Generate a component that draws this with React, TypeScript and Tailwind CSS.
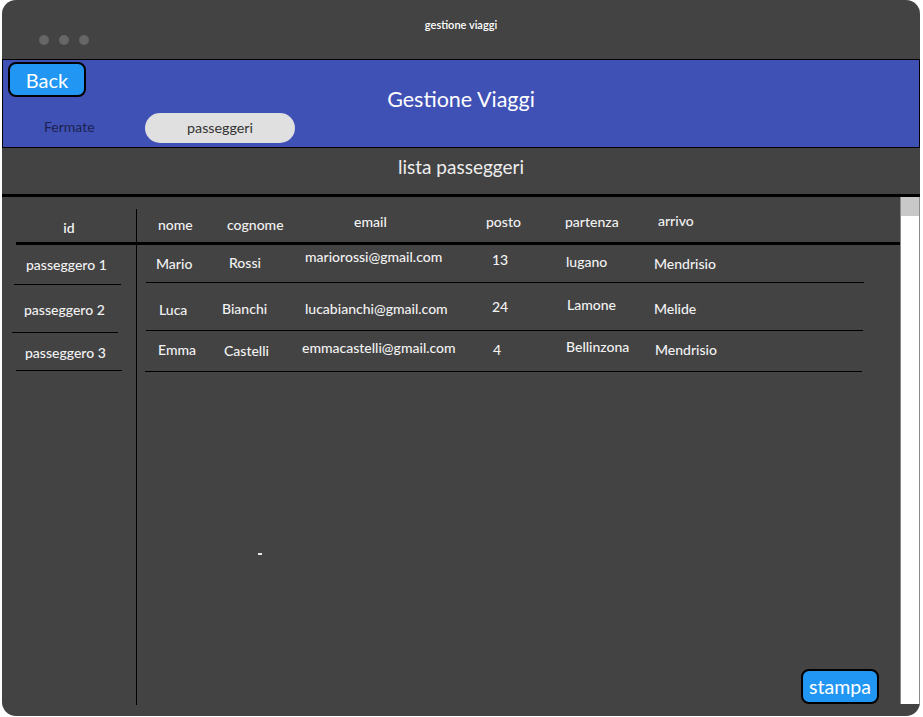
import React from "react";

type Cell = { t: string; pl: number; mt: number };

const COLS = [66, 80, 184, 79, 89, 120];

const header: Cell[] = [
  { t: "nome", pl: 2, mt: 6 },
  { t: "cognome", pl: 5, mt: 6 },
  { t: "email", pl: 52, mt: 3 },
  { t: "posto", pl: 0, mt: 3 },
  { t: "partenza", pl: 0, mt: 3 },
  { t: "arrivo", pl: 4, mt: 2 },
];

const rows: { h: number; cells: Cell[]; line: { ml: number; w: number } }[] = [
  {
    h: 37,
    line: { ml: 9, w: 718 },
    cells: [
      { t: "Mario", pl: 0, mt: 9 },
      { t: "Rossi", pl: 7, mt: 8 },
      { t: "mariorossi@gmail.com", pl: 3, mt: 2 },
      { t: "13", pl: 6, mt: 5 },
      { t: "lugano", pl: 1, mt: 7 },
      { t: "Mendrisio", pl: 0, mt: 9 },
    ],
  },
  {
    h: 47,
    line: { ml: 9, w: 717 },
    cells: [
      { t: "Luca", pl: 3, mt: 17 },
      { t: "Bianchi", pl: 0, mt: 16 },
      { t: "lucabianchi@gmail.com", pl: 3, mt: 16 },
      { t: "24", pl: 6, mt: 14 },
      { t: "Lamone", pl: 2, mt: 12 },
      { t: "Melide", pl: 0, mt: 16 },
    ],
  },
  {
    h: 40,
    line: { ml: 8, w: 717 },
    cells: [
      { t: "Emma", pl: 2, mt: 9 },
      { t: "Castelli", pl: 2, mt: 10 },
      { t: "emmacastelli@gmail.com", pl: 0, mt: 7 },
      { t: "4", pl: 7, mt: 9 },
      { t: "Bellinzona", pl: 1, mt: 6 },
      { t: "Mendrisio", pl: 1, mt: 9 },
    ],
  },
];

function Row({ cells, h }: { cells: Cell[]; h: number }) {
  return (
    <div className="flex items-start pl-[19px]" style={{ height: h }}>
      {cells.map((c, i) => (
        <div
          key={i}
          className="shrink-0 text-[14px] leading-[20px] font-medium text-[#f2f2f2] whitespace-nowrap"
          style={{ width: COLS[i], paddingLeft: c.pl, marginTop: c.mt }}
        >
          {c.t}
        </div>
      ))}
    </div>
  );
}

export default function App() {
  return (
    <div
      className="w-[923px] h-[717px] bg-white overflow-hidden"
      style={{ fontFamily: "Lato, 'Open Sans', sans-serif" }}
    >
      <div className="ml-[2px] w-[918px] h-[716px] rounded-[14px] bg-[#434343] overflow-hidden flex flex-col">
        {/* title bar */}
        <div className="h-[59px] shrink-0 relative">
          <div className="pt-[17px] text-center text-[11px] leading-[16px] font-semibold text-white">
            gestione viaggi
          </div>
          <div className="flex gap-[10px] ml-[37px] mt-[2px]">
            <span className="w-[10px] h-[10px] rounded-full bg-[#666666]" />
            <span className="w-[10px] h-[10px] rounded-full bg-[#666666]" />
            <span className="w-[10px] h-[10px] rounded-full bg-[#666666]" />
          </div>
        </div>

        {/* blue header */}
        <div className="h-[89px] shrink-0 border border-black bg-[#3f51b5] relative flex flex-col">
          <div className="absolute left-0 right-0 top-[24px] text-center text-[21.5px] leading-[30px] text-white">
            Gestione Viaggi
          </div>
          <button className="relative ml-[5px] mt-[2px] w-[78px] h-[35px] rounded-[8px] border-2 border-black bg-[#2196f3] text-white text-[20px] leading-[28px] flex items-center justify-center">
            Back
          </button>
          <div className="flex items-center mt-[16px]">
            <div className="ml-[41px] w-[101px] text-[14px] leading-[18px] pb-[2px] text-[#1c2350]">Fermate</div>
            <div className="w-[150px] h-[30px] rounded-full bg-[#e0e0e0] text-[14.3px] text-[#333333] flex items-center justify-center">
              passeggeri
            </div>
          </div>
        </div>

        {/* section title */}
        <div className="h-[46px] shrink-0 pt-[6px] text-center text-[19px] leading-[26px] text-[#eeeeee]">
          lista passeggeri
        </div>
        <div className="h-[3px] shrink-0 bg-black" />

        {/* body */}
        <div className="flex h-[508px] shrink-0">
          {/* id column */}
          <div className="w-[135px] mt-[12px] border-r border-black flex flex-col">
            <div className="h-[33px] text-center text-[14px] leading-[20px] text-[#f2f2f2] pt-[9px] font-semibold">
              id
            </div>
            <div className="h-[3px] ml-[14px] bg-black" />
            <div className="h-[39px] flex items-center pl-[24px] text-[14px] font-medium text-[#f2f2f2]">passeggero 1</div>
            <div className="h-px ml-[12px] w-[107px] bg-black" />
            <div className="h-[47px] flex items-center pl-[22px] pt-[2px] text-[14px] font-medium text-[#f2f2f2]">passeggero 2</div>
            <div className="h-px ml-[10px] w-[106px] bg-black" />
            <div className="h-[37px] flex items-center pl-[23px] pt-[1px] text-[14px] font-medium text-[#f2f2f2]">passeggero 3</div>
            <div className="h-px ml-[14px] w-[106px] bg-black" />
          </div>

          {/* data column */}
          <div className="flex-1 mt-[12px] flex flex-col">
            <Row cells={header} h={33} />
            <div className="h-[3px] bg-black" />
            {rows.map((r, i) => (
              <React.Fragment key={i}>
                <Row cells={r.cells} h={r.h} />
                <div className="h-px bg-black" style={{ marginLeft: r.line.ml, width: r.line.w }} />
              </React.Fragment>
            ))}
            <div className="ml-[121px] mt-[181px] w-[4px] h-[2px] bg-[#e8e8e8]" />
            <div className="flex-1" />
            <button className="self-end mr-[21px] mb-[1px] w-[78px] h-[35px] rounded-[8px] border-2 border-black bg-[#2196f3] text-white text-[19.5px] leading-[28px] flex items-center justify-center">
              stampa
            </button>
          </div>

          {/* scrollbar */}
          <div className="w-[20px] h-[507px] border-l border-r border-[#8a8a8a] bg-white flex flex-col">
            <div className="h-[19px] bg-[#c8c8c8]" />
          </div>
        </div>
      </div>
    </div>
  );
}
